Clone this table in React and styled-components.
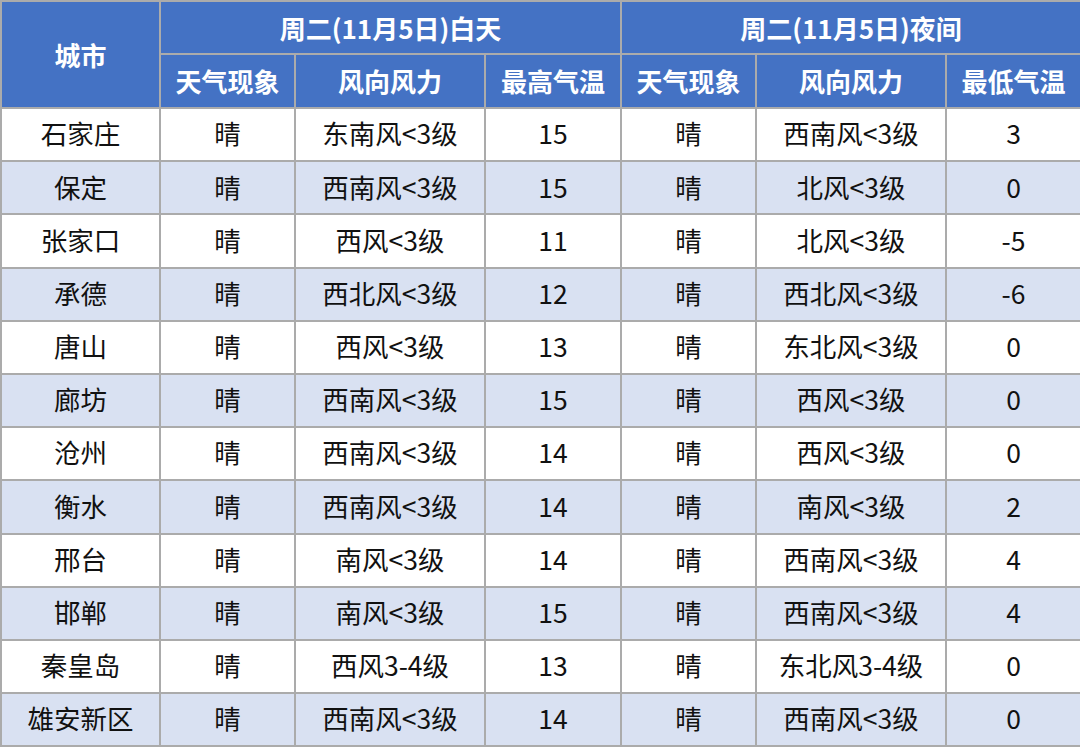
import React from "react";
import styled, { createGlobalStyle } from "styled-components";

const rows = [
  ["石家庄", "晴", "东南风<3级", "15", "晴", "西南风<3级", "3"],
  ["保定", "晴", "西南风<3级", "15", "晴", "北风<3级", "0"],
  ["张家口", "晴", "西风<3级", "11", "晴", "北风<3级", "-5"],
  ["承德", "晴", "西北风<3级", "12", "晴", "西北风<3级", "-6"],
  ["唐山", "晴", "西风<3级", "13", "晴", "东北风<3级", "0"],
  ["廊坊", "晴", "西南风<3级", "15", "晴", "西风<3级", "0"],
  ["沧州", "晴", "西南风<3级", "14", "晴", "西风<3级", "0"],
  ["衡水", "晴", "西南风<3级", "14", "晴", "南风<3级", "2"],
  ["邢台", "晴", "南风<3级", "14", "晴", "西南风<3级", "4"],
  ["邯郸", "晴", "南风<3级", "15", "晴", "西南风<3级", "4"],
  ["秦皇岛", "晴", "西风3-4级", "13", "晴", "东北风3-4级", "0"],
  ["雄安新区", "晴", "西南风<3级", "14", "晴", "西南风<3级", "0"],
];

const colWidths = [159, 135, 190, 136, 135, 190, 135];

const GlobalStyle = createGlobalStyle`
  html, body {
    margin: 0;
    padding: 0;
    background: #fff;
  }
  body {
    font-family: "Noto Sans CJK SC", "Noto Sans", sans-serif;
  }
`;

const Table = styled.table`
  width: 1080px;
  border-collapse: collapse;
  table-layout: fixed;
  border: 2px solid #ababab;
`;

const HeadCell = styled.th`
  background: #4472c4;
  color: #fff;
  font-size: 26px;
  font-weight: 700;
  text-align: center;
  vertical-align: middle;
  border: 2px solid #ababab;
  padding: 0;
  height: ${(p) => p.$h || 51}px;
  line-height: 1;
`;

const Row = styled.tr`
  background: ${(p) => (p.$alt ? "#d9e1f2" : "#ffffff")};
`;

const Cell = styled.td`
  color: #111;
  font-size: 26.5px;
  font-weight: 400;
  text-align: center;
  vertical-align: middle;
  border: 2px solid #ababab;
  padding: 0 0 2px;
  height: 49.2px;
  line-height: 1;
`;

export default function App() {
  return (
    <>
      <GlobalStyle />
      <Table>
        <colgroup>
          {colWidths.map((w, i) => (
            <col key={i} style={{ width: w }} />
          ))}
        </colgroup>
        <thead>
          <tr>
            <HeadCell rowSpan={2}>城市</HeadCell>
            <HeadCell colSpan={3}>周二(11月5日)白天</HeadCell>
            <HeadCell colSpan={3}>周二(11月5日)夜间</HeadCell>
          </tr>
          <tr>
            <HeadCell $h={52}>天气现象</HeadCell>
            <HeadCell $h={52}>风向风力</HeadCell>
            <HeadCell $h={52}>最高气温</HeadCell>
            <HeadCell $h={52}>天气现象</HeadCell>
            <HeadCell $h={52}>风向风力</HeadCell>
            <HeadCell $h={52}>最低气温</HeadCell>
          </tr>
        </thead>
        <tbody>
          {rows.map((r, i) => (
            <Row key={i} $alt={i % 2 === 1}>
              {r.map((v, j) => (
                <Cell key={j}>{v}</Cell>
              ))}
            </Row>
          ))}
        </tbody>
      </Table>
    </>
  );
}
